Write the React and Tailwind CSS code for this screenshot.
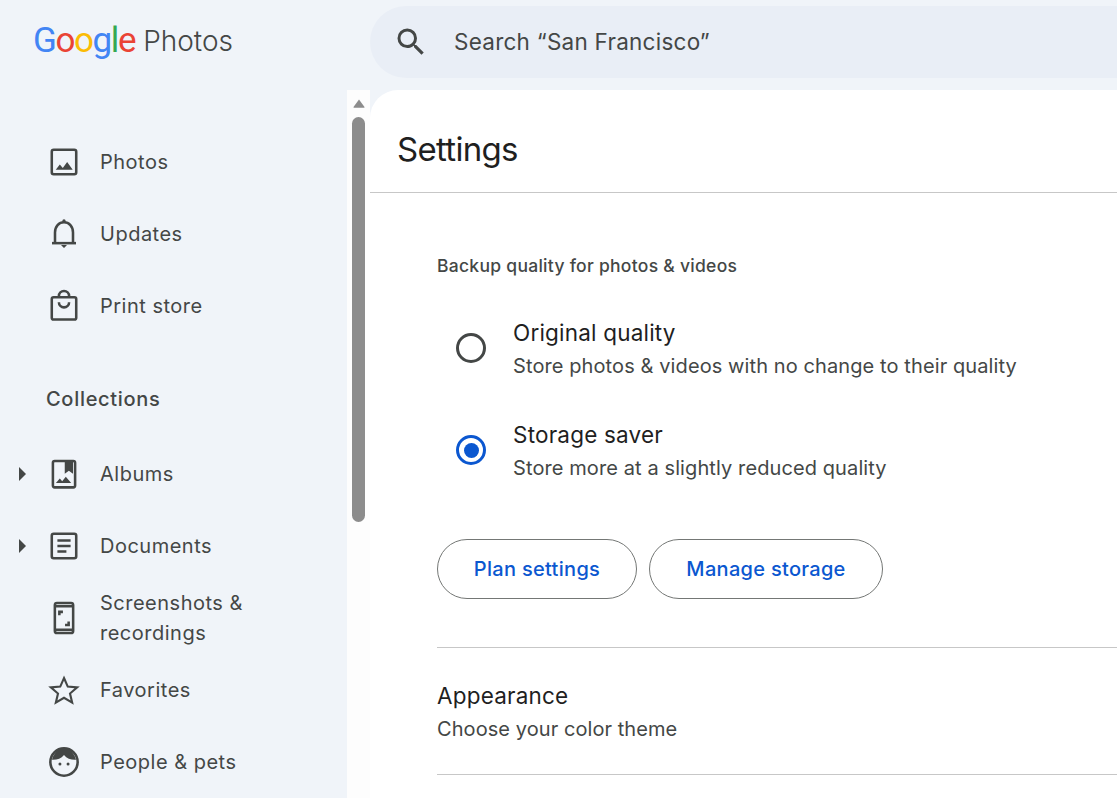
import React from "react";

const S = ({ children }) => (
  <svg width="36" height="36" viewBox="0 0 24 24" fill="none" stroke="#444746" strokeWidth="1.7" className="shrink-0">
    {children}
  </svg>
);

const icons = {
  photos: (
    <S>
      <rect x="3.850" y="3.850" width="16.300" height="16.300" rx="1.300" />
      <path d="M6.500 17.200l2.700-3.600 2 2.400 2.900-4 3.700 5.200z" fill="#444746" stroke="none" />
    </S>
  ),
  updates: (
    <S>
      <path d="M6 18v-7C6 7 8.600 4.200 12 4.200S18 7 18 11v7" />
      <path d="M4 18.100h16" />
      <path d="M10.900 4.500V3.300a1.100 1.100 0 0 1 2.200 0v1.200zM10 19.300h4l-2 2z" fill="#444746" stroke="none" />
    </S>
  ),
  print: (
    <S>
      <rect x="3.850" y="6.100" width="16.300" height="14.900" rx="1.200" />
      <path d="M8.600 6.100v-.700a3.400 3.400 0 0 1 6.800 0v.700M8.600 9.500a3.400 3.400 0 0 0 6.800 0" />
    </S>
  ),
  albums: (
    <S>
      <rect x="4.600" y="3.300" width="14.800" height="17.600" rx="1.200" />
      <path d="M12.500 3.300h5.500v8.600l-2.750-2-2.750 2zM6.600 18l2.600-3 1.600 1.900 2.400-3 3.600 4.100z" fill="#444746" stroke="none" />
    </S>
  ),
  docs: (
    <S>
      <rect x="3.850" y="3.850" width="16.300" height="16.300" rx="1.300" />
      <path d="M7.600 8.300h8.800M7.600 12h8.800M7.600 15.700h6" />
    </S>
  ),
  screens: (
    <S>
      <rect x="5.900" y="2" width="12.200" height="20" rx="1.400" />
      <path d="M5.900 4.200h12.200M5.900 19.800h12.200M8.900 10.200V7.900h2.400M15.100 14.300v2.300h-2.400" />
    </S>
  ),
  star: (
    <S>
      <path d="M12 4l2.500 5.700 6.300.550-4.800 4.100 1.450 6.100L12 17.200l-5.450 3.250L8 14.350l-4.800-4.100 6.300-.550z" strokeWidth="1.400" />
    </S>
  ),
  people: (
    <S>
      <circle cx="12" cy="12" r="9.100" />
      <path d="M4 10.500C5 6 8.500 3 12 3s7 3 8 7.500c-3.200.200-6-.800-8-3.200-2 2.400-4.800 3.400-8 3.200z" fill="#444746" stroke="none" />
      <circle cx="9.300" cy="13.300" r="1" fill="#444746" stroke="none" />
      <circle cx="14.700" cy="13.300" r="1" fill="#444746" stroke="none" />
    </S>
  ),
};

const Caret = () => (
  <svg width="9" height="14" viewBox="0 0 9 14" className="absolute left-[18px] top-1/2 -translate-y-1/2">
    <path d="M1 0l7 7-7 7z" fill="#444746" />
  </svg>
);

const NavItem = ({ icon, caret, children }) => (
  <div className="relative flex h-[72px] items-center pl-[46px]">
    {caret && <Caret />}
    {icons[icon]}
    <span className="ml-[18px] text-[20px] leading-[30px] tracking-[0.5px] text-[#444746]">{children}</span>
  </div>
);

const Radio = ({ checked, title, sub }) => (
  <div className="flex h-[102px] items-center pl-[19px]">
    <div className={`flex h-[30px] w-[30px] items-center justify-center rounded-full border-[3px] ${checked ? "border-[#0b57d0]" : "border-[#444746]"}`}>
      {checked && <div className="h-[15px] w-[15px] rounded-full bg-[#0b57d0]" />}
    </div>
    <div className="ml-[27px] pt-[3px]">
      <div className="text-[22.5px] leading-[30px] tracking-[0.2px] text-[#1f1f1f]">{title}</div>
      <div className="mt-[3px] text-[20px] leading-[30px] tracking-[0.1px] text-[#444746]">{sub}</div>
    </div>
  </div>
);

const Btn = ({ w, children }) => (
  <button className={`h-[60px] rounded-full border border-[#747775] text-[20px] font-medium tracking-[0.3px] text-[#0b57d0] ${w}`}>
    {children}
  </button>
);

export default function App() {
  return (
    <div className="flex h-[798px] w-[1117px] flex-col overflow-hidden bg-[#f0f4f9] font-['Inter',sans-serif]">
      <header className="flex h-[90px] shrink-0 items-start">
        <div className="flex w-[370px] shrink-0 items-center pl-[33px] pt-[20px] leading-[42px]">
          <span className="font-['Roboto',sans-serif] text-[35px] tracking-[-1.4px]">
            <span className="text-[#4285f4]">G</span>
            <span className="text-[#ea4335]">o</span>
            <span className="text-[#fbbc05]">o</span>
            <span className="text-[#4285f4]">g</span>
            <span className="text-[#34a853]">l</span>
            <span className="text-[#ea4335]">e</span>
          </span>
          <span className="ml-[8px] text-[28px] font-light text-[#444746]">Photos</span>
        </div>
        <div className="mt-[6px] flex h-[72px] w-[800px] shrink-0 items-center rounded-full bg-[#e9eef6] pl-[23px]">
          <svg width="36" height="36" viewBox="0 0 24 24" fill="#444746">
            <path d="M15.500 14h-.790l-.280-.270A6.470 6.470 0 0 0 16 9.500 6.500 6.500 0 1 0 9.500 16c1.610 0 3.090-.590 4.230-1.570l.270.280v.790l5 4.990L20.490 19l-4.990-5zm-6 0C7.010 14 5 11.990 5 9.500S7.010 5 9.500 5 14 7.010 14 9.500 11.990 14 9.500 14z" />
          </svg>
          <span className="ml-[25px] text-[22.5px] tracking-[0.25px] text-[#444746]">Search “San Francisco”</span>
        </div>
      </header>
      <div className="flex min-h-0 flex-1">
        <nav className="w-[347px] shrink-0 pt-[36px]">
          <NavItem icon="photos">Photos</NavItem>
          <NavItem icon="updates">Updates</NavItem>
          <NavItem icon="print">Print store</NavItem>
          <div className="h-[96px] pl-[46px] pt-[42px] text-[20px] font-medium leading-[30px] tracking-[0.7px] text-[#444746]">Collections</div>
          <NavItem icon="albums" caret>Albums</NavItem>
          <NavItem icon="docs" caret>Documents</NavItem>
          <NavItem icon="screens">Screenshots &<br />recordings</NavItem>
          <NavItem icon="star">Favorites</NavItem>
          <NavItem icon="people">People & pets</NavItem>
        </nav>
        <div className="flex w-[23px] shrink-0 flex-col items-center bg-[#fdfdfd] pt-[9px]">
          <svg width="12" height="9" viewBox="0 0 12 9"><path d="M6 0.500l5.500 7.500a.6.6 0 0 1-.5.800H1a.6.6 0 0 1-.5-.800z" fill="#8c8c8c" /></svg>
          <div className="mt-[9px] h-[405px] w-[13px] rounded-full bg-[#8c8c8c]" />
        </div>
        <main className="flex-1 rounded-tl-[28px] bg-white">
          <div className="flex h-[103px] items-center border-b border-[#c7c7c7] pl-[27px] pt-[18px] text-[33px] tracking-[-0.7px] text-[#1f1f1f]">Settings</div>
          <div className="pl-[67px]">
            <div className="mt-[60px] text-[17.5px] leading-[26px] tracking-[0.28px] text-[#444746] font-[450]">Backup quality for photos & videos</div>
            <div className="mt-[18px]">
              <Radio title="Original quality" sub="Store photos & videos with no change to their quality" />
              <Radio checked title="Storage saver" sub="Store more at a slightly reduced quality" />
            </div>
            <div className="mt-[38px] flex gap-3">
              <Btn w="w-[200px]">Plan settings</Btn>
              <Btn w="w-[234px]">Manage storage</Btn>
            </div>
            <div className="mt-[48px] h-[128px] border-y border-[#c7c7c7] pt-[32px]">
              <div className="text-[22.5px] leading-[32px] tracking-[0.2px] text-[#1f1f1f]">Appearance</div>
              <div className="text-[20px] leading-[34px] tracking-[0.07px] text-[#444746]">Choose your color theme</div>
            </div>
          </div>
        </main>
      </div>
    </div>
  );
}
